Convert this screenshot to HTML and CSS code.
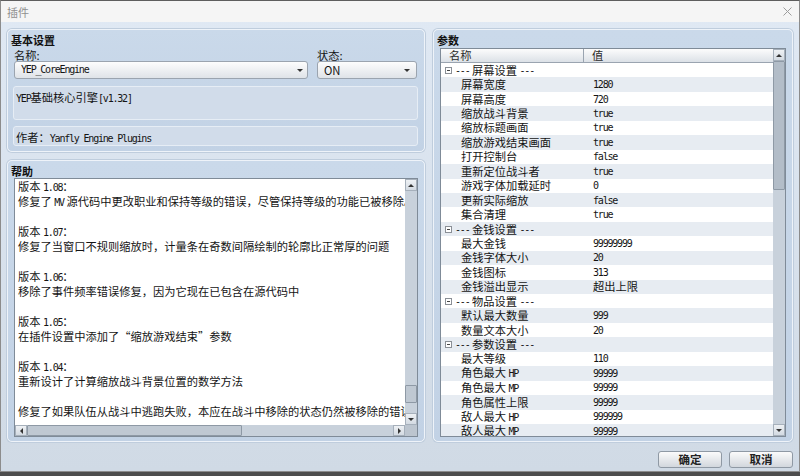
FILE: index.html
```html
<!DOCTYPE html>
<html lang="zh-CN">
<head>
<meta charset="utf-8">
<title>插件</title>
<link rel="stylesheet" href="styles.css">
</head>
<body>
<div class="window">
  <div class="titlebar">
    <span class="title">插件</span>
    <svg class="close" viewBox="0 0 9 9"><path d="M0.5 0.5L8.5 8.5M8.5 0.5L0.5 8.5" stroke="#9c9c9c" stroke-width="1" fill="none"/></svg>
  </div>
  <div class="client">
    <div class="left">
      <section class="panel basic">
        <h3>基本设置</h3>
        <div class="fields">
          <div class="field name">
            <label>名称:</label>
            <div class="select"><span class="m">YEP_CoreEngine</span><i class="tri-down"></i></div>
          </div>
          <div class="field status">
            <label>状态:</label>
            <div class="select"><span>ON</span><i class="tri-down"></i></div>
          </div>
        </div>
        <div class="box desc"><span class="m">YEP</span>基础核心引擎<span class="m">[v1.32]</span></div>
        <div class="box author">作者：<span class="m">Yanfly Engine Plugins</span></div>
      </section>
      <section class="panel help">
        <h3>帮助</h3>
        <div class="textarea">
          <div class="ta-content">
            <div class="ta-text">
              <div class="ln">版本 <span class="m">1.08</span>：</div>
              <div class="ln">修复了 <span class="m">MV</span> 源代码中更改职业和保持等级的错误，尽管保持等级的功能已被移除。</div>
              <div class="ln"></div>
              <div class="ln">版本 <span class="m">1.07</span>：</div>
              <div class="ln">修复了当窗口不规则缩放时，计量条在奇数间隔绘制的轮廓比正常厚的问题</div>
              <div class="ln"></div>
              <div class="ln">版本 <span class="m">1.06</span>：</div>
              <div class="ln">移除了事件频率错误修复，因为它现在已包含在源代码中</div>
              <div class="ln"></div>
              <div class="ln">版本 <span class="m">1.05</span>：</div>
              <div class="ln">在插件设置中添加了“缩放游戏结束”参数</div>
              <div class="ln"></div>
              <div class="ln">版本 <span class="m">1.04</span>：</div>
              <div class="ln">重新设计了计算缩放战斗背景位置的数学方法</div>
              <div class="ln"></div>
              <div class="ln">修复了如果队伍从战斗中逃跑失败，本应在战斗中移除的状态仍然被移除的错误。</div>
            </div>
          </div>
          <div class="vs small">
            <div class="sb-btn"><i class="tri-up"></i></div>
            <div class="track"><div class="thumb"></div></div>
            <div class="sb-btn"><i class="tri-down"></i></div>
          </div>
          <div class="hs">
            <div class="sb-btn"><i class="tri-left"></i></div>
            <div class="track"><div class="thumb"></div></div>
            <div class="sb-btn"><i class="tri-right"></i></div>
          </div>
          <div class="corner"></div>
        </div>
      </section>
    </div>
    <section class="panel params">
      <h3>参数</h3>
      <div class="table">
        <div class="tmain">
          <div class="thead"><div class="c1">名称</div><div class="c2">值</div></div>
          <div class="tbody">
            <div class="trow sec"><svg viewBox="0 0 7 7"><rect x="0.5" y="0.5" width="6" height="6" fill="#fff" stroke="#8a8f96"/><path d="M2 3.5H5" stroke="#444"/></svg><span class="m">---</span>&nbsp;屏幕设置&nbsp;<span class="m">---</span></div>
            <div class="trow"><div class="c1">屏幕宽度</div><div class="c2 m">1280</div></div>
            <div class="trow"><div class="c1">屏幕高度</div><div class="c2 m">720</div></div>
            <div class="trow"><div class="c1">缩放战斗背景</div><div class="c2 m">true</div></div>
            <div class="trow"><div class="c1">缩放标题画面</div><div class="c2 m">true</div></div>
            <div class="trow"><div class="c1">缩放游戏结束画面</div><div class="c2 m">true</div></div>
            <div class="trow"><div class="c1">打开控制台</div><div class="c2 m">false</div></div>
            <div class="trow"><div class="c1">重新定位战斗者</div><div class="c2 m">true</div></div>
            <div class="trow"><div class="c1">游戏字体加载延时</div><div class="c2 m">0</div></div>
            <div class="trow"><div class="c1">更新实际缩放</div><div class="c2 m">false</div></div>
            <div class="trow"><div class="c1">集合清理</div><div class="c2 m">true</div></div>
            <div class="trow sec"><svg viewBox="0 0 7 7"><rect x="0.5" y="0.5" width="6" height="6" fill="#fff" stroke="#8a8f96"/><path d="M2 3.5H5" stroke="#444"/></svg><span class="m">---</span>&nbsp;金钱设置&nbsp;<span class="m">---</span></div>
            <div class="trow"><div class="c1">最大金钱</div><div class="c2 m">99999999</div></div>
            <div class="trow"><div class="c1">金钱字体大小</div><div class="c2 m">20</div></div>
            <div class="trow"><div class="c1">金钱图标</div><div class="c2 m">313</div></div>
            <div class="trow"><div class="c1">金钱溢出显示</div><div class="c2">超出上限</div></div>
            <div class="trow sec"><svg viewBox="0 0 7 7"><rect x="0.5" y="0.5" width="6" height="6" fill="#fff" stroke="#8a8f96"/><path d="M2 3.5H5" stroke="#444"/></svg><span class="m">---</span>&nbsp;物品设置&nbsp;<span class="m">---</span></div>
            <div class="trow"><div class="c1">默认最大数量</div><div class="c2 m">999</div></div>
            <div class="trow"><div class="c1">数量文本大小</div><div class="c2 m">20</div></div>
            <div class="trow sec"><svg viewBox="0 0 7 7"><rect x="0.5" y="0.5" width="6" height="6" fill="#fff" stroke="#8a8f96"/><path d="M2 3.5H5" stroke="#444"/></svg><span class="m">---</span>&nbsp;参数设置&nbsp;<span class="m">---</span></div>
            <div class="trow"><div class="c1">最大等级</div><div class="c2 m">110</div></div>
            <div class="trow"><div class="c1">角色最大 <span class="m">HP</span></div><div class="c2 m">99999</div></div>
            <div class="trow"><div class="c1">角色最大 <span class="m">MP</span></div><div class="c2 m">99999</div></div>
            <div class="trow"><div class="c1">角色属性上限</div><div class="c2 m">99999</div></div>
            <div class="trow"><div class="c1">敌人最大 <span class="m">HP</span></div><div class="c2 m">999999</div></div>
            <div class="trow"><div class="c1">敌人最大 <span class="m">MP</span></div><div class="c2 m">99999</div></div>
          </div>
        </div>
        <div class="vs big">
          <div class="sb-btn"><i class="tri-up"></i></div>
          <div class="track"><div class="thumb"></div></div>
          <div class="sb-btn"><i class="tri-down"></i></div>
        </div>
      </div>
    </section>
    <div class="footer">
      <button class="btn">确定</button>
      <button class="btn">取消</button>
    </div>
  </div>
</div>
</body>
</html>
```

FILE: styles.css
```css
* { box-sizing: border-box; margin: 0; padding: 0; }
html, body { width: 800px; height: 476px; overflow: hidden; }
body {
  background: #4d4d4d;
  font-family: "Noto Sans CJK SC", "Noto Sans", sans-serif;
  font-size: 11.25px;
  line-height: 14px;
  color: #141414;
}
.m {
  font-family: "DejaVu Sans Mono", "Liberation Mono", "Noto Sans CJK SC", monospace;
  font-size: 10px;
  letter-spacing: -1.2px;
}
.window {
  width: 800px;
  height: 472px;
  border: 1px solid #8c8c8c;
  border-top-color: #5e5e5e;
  background: linear-gradient(#e0e9f4, #d0dae5);
  display: flex;
  flex-direction: column;
}
.titlebar {
  height: 21px;
  flex: none;
  background: #f5f5f5;
  display: flex;
  align-items: center;
  justify-content: space-between;
  padding: 0 7px 0 6px;
}
.title { color: #909090; font-size: 11px; }
.close { width: 9px; height: 9px; display: block; }

.client {
  flex: 1;
  display: grid;
  grid-template-columns: 418px 360px;
  grid-template-rows: 413px auto;
  column-gap: 8px;
  padding: 7px 6px 0 6px;
}
.left { display: flex; flex-direction: column; gap: 8px; }

.panel {
  background: linear-gradient(#cad9ea, #c2d2e5);
  border: 1px solid #eef3f9;
  border-radius: 5px;
  box-shadow: 0 0 0 1px #bfcddd;
  padding: 3px 6px 4px 6px;
}
.panel h3 {
  font-size: 11px;
  font-weight: bold;
  line-height: 14px;
  height: 14px;
  margin-left: -3px;
  color: #111;
}

/* basic settings */
.basic { height: 123px; padding: 3px 6px 5px 3px; flex: none; }
.basic h3 { margin-left: 0; }
.fields { display: flex; gap: 9px; margin: 2px 0 0 3px; }
.field label { display: block; height: 12px; line-height: 12px; }
.select {
  height: 18px;
  border: 1px solid #9ba4af;
  border-radius: 3px;
  background: linear-gradient(#fdfdfd, #dfe3e8);
  display: flex;
  align-items: center;
  justify-content: space-between;
  padding: 0 4px 0 6px;
  line-height: 16px;
}
.name .select { width: 294px; }
.status .select { width: 100px; padding-right: 6px; }
.box {
  margin-left: 2px;
  width: 405px;
  background: #d1dcea;
  border: 1px solid #e6edf5;
  border-radius: 3px;
  padding: 3px 2px 0 2px;
}
.desc { margin-top: 7px; height: 34px; }
.author { margin-top: 6px; height: 20px; }

/* triangles */
.tri-down, .tri-up, .tri-left, .tri-right { display: block; width: 0; height: 0; }
.tri-down { border-left: 3px solid transparent; border-right: 3px solid transparent; border-top: 3px solid #333; }
.tri-up { border-left: 3px solid transparent; border-right: 3px solid transparent; border-bottom: 3px solid #333; }
.tri-left { border-top: 3px solid transparent; border-bottom: 3px solid transparent; border-right: 3px solid #333; }
.tri-right { border-top: 3px solid transparent; border-bottom: 3px solid transparent; border-left: 3px solid #333; }

/* help */
.help { height: 282px; flex: none; }
.textarea {
  height: 259px;
  border: 1px solid #7f8b98;
  background: #fff;
  display: grid;
  grid-template-columns: 1fr 12px;
  grid-template-rows: 1fr 11px;
}
.ta-content { overflow: hidden; padding-left: 3px; }
.ln { height: 15px; line-height: 15px; white-space: nowrap; }

.sb-btn {
  flex: none;
  background: linear-gradient(#eef1f4, #d3dae2);
  border: 1px solid #a6b0bb;
  display: flex;
  align-items: center;
  justify-content: center;
}
.vs { display: flex; flex-direction: column; background: #c8d1db; }
.vs .sb-btn { height: 12px; }
.vs .track { flex: 1; display: flex; flex-direction: column; }
.thumb { background: #bfc8d2; border: 1px solid #8e99a5; border-radius: 1px; }
.vs.small .thumb { margin-top: 194px; height: 18px; }
.vs.big .thumb { height: 129px; background: #b3bdc8; }
.hs { display: flex; background: #c8d1db; }
.hs .sb-btn { width: 12px; }
.hs .track { flex: 1; display: flex; }
.hs .thumb { width: 215px; }
.corner { background: #bcc5cf; }

/* params */
.params { height: 413px; grid-column: 2; grid-row: 1; }
.table {
  margin-top: 1px;
  height: 389px;
  border: 1px solid #7f8b98;
  background: #fff;
  display: flex;
}
.tmain { flex: 1; overflow: hidden; }
.thead {
  height: 14px;
  display: flex;
  background: linear-gradient(#fcfcfc, #dce1e7);
  border-bottom: 1px solid #9aa4b0;
  line-height: 13px;
  color: #2a2a2a;
}
.thead .c1 { width: 143px; padding-left: 8px; border-right: 1px solid #9aa4b0; }
.thead .c2 { padding-left: 8px; }
.trow { height: 14.44px; line-height: 13px; display: flex; align-items: center; white-space: nowrap; }
.tbody .trow:nth-child(even) { background: #e7ecf2; }
.trow .c1 { width: 144px; padding-left: 20px; }
.trow .c2 { padding-left: 8px; }
.trow.sec { padding-left: 4px; }
.trow.sec svg { width: 7px; height: 7px; margin-right: 3px; display: block; flex: none; }
.vs.big { width: 12px; flex: none; }

/* footer */
.footer {
  grid-column: 1 / -1;
  grid-row: 2;
  display: flex;
  justify-content: flex-end;
  gap: 7px;
  margin-top: 9px;
}
.btn {
  width: 64px;
  height: 17px;
  border: 1px solid #8f99a4;
  border-radius: 3px;
  background: linear-gradient(#fbfbfb, #d2d7dd);
  font-family: "Noto Sans CJK SC", sans-serif;
  font-size: 11.5px;
  font-weight: bold;
  line-height: 15px;
  color: #222;
}
```
